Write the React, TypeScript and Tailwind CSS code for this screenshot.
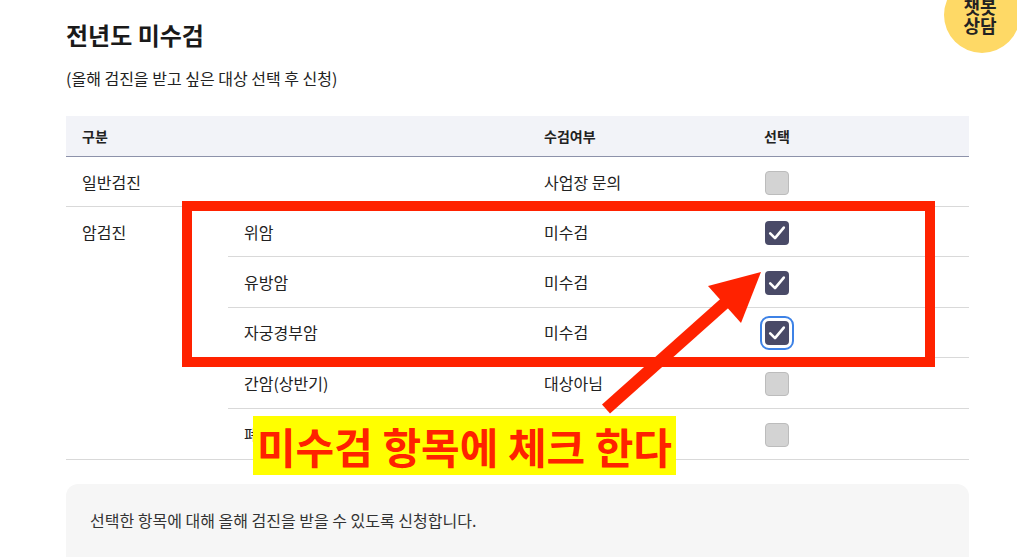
import React from "react";

const font = { fontFamily: '"Noto Sans CJK KR", "Noto Sans", sans-serif' };

function Box({ checked, focus }: { checked?: boolean; focus?: boolean }) {
  if (!checked) {
    return <div className="w-[24px] h-[24px] rounded-[4px] bg-[#d3d3d3] border border-[#bcbcbc]" />;
  }
  return (
    <div
      className={
        "w-[24px] h-[24px] rounded-[4px] bg-[#494a67] flex items-center justify-center " +
        (focus ? "outline-2 outline-[#3d82e6] outline-offset-[3px]" : "")
      }
    >
      <svg width="24" height="24" viewBox="0 0 24 24" fill="none">
        <path d="M5.2 12.4 L10 17.2 L18.8 6.6" stroke="white" strokeWidth="2.6" strokeLinecap="round" strokeLinejoin="round" />
      </svg>
    </div>
  );
}

const subRows: { name: string; status: string; checked: boolean; focus?: boolean }[] = [
  { name: "위암", status: "미수검", checked: true },
  { name: "유방암", status: "미수검", checked: true },
  { name: "자궁경부암", status: "미수검", checked: true, focus: true },
  { name: "간암(상반기)", status: "대상아님", checked: false },
  { name: "폐암", status: "대상아님", checked: false },
];

export default function App() {
  return (
    <div className="relative w-[1017px] h-[557px] overflow-hidden bg-white text-[#222]" style={font}>
      <div className="pl-[66px] pr-[48px] pt-[19px]">
        <h1 className="text-[24px] font-bold leading-[32px] text-[#1a1a1a]">전년도 미수검</h1>
        <p className="mt-[15px] text-[16px] leading-[24px] text-[#222]">(올해 검진을 받고 싶은 대상 선택 후 신청)</p>

        <div className="mt-[26px] w-[903px]">
          {/* header */}
          <div className="flex h-[41px] items-center bg-[#f2f3f8] border-b border-[#8d92aa] text-[14px] font-bold text-[#222]">
            <div className="w-[462px] pl-[16px]">구분</div>
            <div className="w-[220px] pl-[16px]">수검여부</div>
            <div className="pl-[16px]">선택</div>
          </div>
          {/* 일반검진 */}
          <div className="flex h-[50px] items-center border-b border-[#d9d9d9] text-[16px]">
            <div className="w-[462px] pl-[16px]">일반검진</div>
            <div className="w-[220px] pl-[16px]">사업장 문의</div>
            <div className="pl-[17px] pt-[2px]">
              <Box />
            </div>
          </div>
          {/* 암검진 */}
          <div className="flex border-b border-[#d9d9d9] text-[16px]">
            <div className="w-[162px] pl-[16px] h-[50px] flex items-center">암검진</div>
            <div className="flex-1">
              {subRows.map((r, i) => (
                <div
                  key={r.name}
                  className={
                    "flex items-center h-[50.4px] " + (i < subRows.length - 1 ? "border-b border-[#d9d9d9]" : "")
                  }
                >
                  <div className="w-[300px] pl-[16px]">{r.name}</div>
                  <div className="w-[220px] pl-[16px]">{r.status}</div>
                  <div className="pl-[17px] pt-[2px]">
                    <Box checked={r.checked} focus={r.focus} />
                  </div>
                </div>
              ))}
            </div>
          </div>

          <div className="mt-[24px] h-[100px] rounded-[12px] bg-[#f6f6f6] px-[24px] pt-[24px] text-[16px] leading-[24px] text-[#333]">
            선택한 항목에 대해 올해 검진을 받을 수 있도록 신청합니다.
          </div>
        </div>
      </div>

      {/* chatbot button */}
      <div className="absolute left-[944px] top-[-23px] w-[76px] h-[76px] rounded-full bg-[#fed966] flex flex-col items-center justify-end pb-[18px] pr-[4px] text-[18px] font-bold leading-[19px] text-[#222]">
        <span>챗봇</span>
        <span>상담</span>
      </div>

      {/* annotation: red box */}
      <div className="absolute left-[182px] top-[201px] w-[753px] h-[166px] border-[10px] border-[#ff2200]" />

      {/* annotation: arrow */}
      <svg className="absolute left-0 top-0" width="1017" height="557" viewBox="0 0 1017 557">
        <line x1="606" y1="409" x2="726" y2="302" stroke="#ff2200" strokeWidth="12" />
        <polygon points="761,272 708,286 741,323" fill="#ff2200" />
      </svg>

      {/* annotation: label */}
      <div className="absolute left-[253px] top-[416px] w-[423px] h-[59px] bg-[#ffff00] flex items-center justify-center">
        <span className="text-[42px] font-bold leading-none text-[#ff2200] whitespace-nowrap">미수검 항목에 체크 한다</span>
      </div>
    </div>
  );
}
